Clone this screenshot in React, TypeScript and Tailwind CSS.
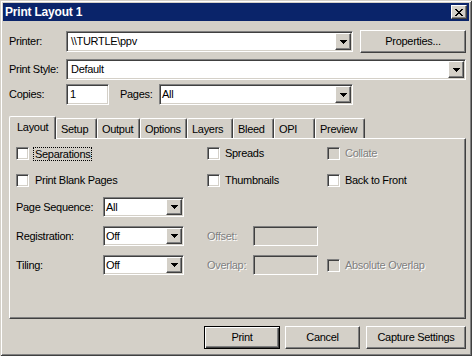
import React from 'react';

const sunken =
  'border border-t-[#808080] border-l-[#808080] border-r-white border-b-white shadow-[inset_1px_1px_0_#404040,inset_-1px_-1px_0_#d4d0c8]';
const raised =
  'border border-t-white border-l-white border-r-[#404040] border-b-[#404040] shadow-[inset_-1px_-1px_0_#808080]';
const disabledText = 'text-[#808080] [text-shadow:1px_1px_0_#ffffff]';

function Arrow() {
  return (
    <svg width="7" height="4" viewBox="0 0 7 4" shapeRendering="crispEdges">
      <rect x="0" y="0" width="7" height="1" fill="#000" />
      <rect x="1" y="1" width="5" height="1" fill="#000" />
      <rect x="2" y="2" width="3" height="1" fill="#000" />
      <rect x="3" y="3" width="1" height="1" fill="#000" />
    </svg>
  );
}

function CloseGlyph() {
  const rows = [
    [0, 2, 6, 2],
    [1, 2, 5, 2],
    [2, 4],
    [3, 2],
    [2, 4],
    [1, 2, 5, 2],
    [0, 2, 6, 2],
  ];
  return (
    <svg width="8" height="7" viewBox="0 0 8 7" shapeRendering="crispEdges">
      {rows.map((r, y) => (
        <g key={y}>
          <rect x={r[0]} y={y} width={r[1]} height="1" fill="#000" />
          {r.length > 2 && <rect x={r[2]} y={y} width={r[3]} height="1" fill="#000" />}
        </g>
      ))}
    </svg>
  );
}

function Combo({ value, className, pl = 'pl-[3px]' }: { value: string; className: string; pl?: string }) {
  return (
    <div className={`${sunken} bg-white p-[1px] flex shrink-0 ${className}`}>
      <div className={`flex-1 flex items-center leading-none ${pl}`}>{value}</div>
      <div className={`${raised} bg-[#d4d0c8] w-[16px] flex items-center justify-center`}>
        <Arrow />
      </div>
    </div>
  );
}

function Check({ disabled }: { disabled?: boolean }) {
  return <div className={`${sunken} w-[13px] h-[13px] shrink-0 ${disabled ? 'bg-[#d4d0c8]' : 'bg-white'}`} />;
}

function Button({ label, className, isDefault }: { label: string; className: string; isDefault?: boolean }) {
  if (isDefault) {
    return (
      <div
        className={`border border-black shadow-[inset_1px_1px_0_#ffffff,inset_-1px_-1px_0_#404040,inset_-2px_-2px_0_#808080] flex items-center justify-center h-[23px] ${className}`}
      >
        {label}
      </div>
    );
  }
  return <div className={`${raised} flex items-center justify-center h-[23px] ${className}`}>{label}</div>;
}

const tabs: [string, string][] = [
  ['Setup', 'w-[41px]'],
  ['Output', 'w-[43px]'],
  ['Options', 'w-[47px]'],
  ['Layers', 'w-[46px]'],
  ['Bleed', 'w-[41px]'],
  ['OPI', 'w-[41px]'],
  ['Preview', 'w-[50px]'],
];

export default function App() {
  return (
    <div className="w-[472px] h-[356px] bg-[#d4d0c8] p-[3px] shadow-[inset_1px_1px_0_#d4d0c8,inset_-1px_-1px_0_#404040,inset_2px_2px_0_#ffffff,inset_-2px_-2px_0_#808080] font-['Liberation_Sans',Arial,sans-serif] text-[11px] tracking-[-0.3px] text-black select-none">
      {/* title bar */}
      <div className="h-[18px] bg-[#0a246a] flex items-center justify-between">
        <span className="pl-[2px] text-white font-bold text-[12px] tracking-[-0.2px]">Print Layout 1</span>
        <div className={`${raised} bg-[#d4d0c8] w-[16px] h-[14px] mr-[2px] flex items-center justify-center`}>
          <CloseGlyph />
        </div>
      </div>

      <div className="pl-[6px] pr-[3px]">
        {/* printer */}
        <div className="mt-[9px] h-[23px] flex items-center">
          <span className="w-[57px]">Printer:</span>
          <Combo value="\\TURTLE\ppv" className="w-[287px] h-[21px]" />
          <Button label="Properties..." className="ml-[7px] w-[106px]" />
        </div>

        {/* style */}
        <div className="mt-[6px] h-[21px] flex items-center">
          <span className="w-[57px]">Print Style:</span>
          <Combo value="Default" className="w-[400px] h-[21px]" />
        </div>

        {/* copies / pages */}
        <div className="mt-[4px] h-[21px] flex items-center">
          <span className="w-[57px]">Copies:</span>
          <div className={`${sunken} bg-white w-[43px] h-[21px] flex items-center pl-[3px] leading-none`}>1</div>
          <span className="ml-[11px] w-[39px]">Pages:</span>
          <Combo value="All" className="w-[194px] h-[21px]" pl="pl-[1px]" />
        </div>

        {/* tabs */}
        <div className="mt-[11px] h-[22px] flex items-end">
          <div className="relative z-10 w-[47px] h-[23px] -mb-px bg-[#d4d0c8] border-l border-t border-r border-l-white border-t-white border-r-[#404040] rounded-t-[2px] shadow-[inset_-1px_0_0_#808080] pl-[7px] pt-[2px]">
            Layout
          </div>
          {tabs.map(([name, w]) => (
            <div
              key={name}
              className={`${w} h-[20px] border-l border-t border-r border-l-white border-t-white border-r-[#404040] rounded-t-[2px] shadow-[inset_-1px_0_0_#808080] pl-[4px] pt-[2px]`}
            >
              {name}
            </div>
          ))}
        </div>

        {/* panel */}
        <div className="h-[181px] border border-t-white border-l-white border-r-[#404040] border-b-[#404040] shadow-[inset_-1px_-1px_0_#808080] pt-[8px] pl-[6px]">
          <div className="flex h-[13px] items-center">
            <div className="w-[191px] flex items-center">
              <Check />
              <span className="ml-[4px] border border-dotted border-black px-[1px] leading-[12px]">Separations</span>
            </div>
            <div className="w-[120px] flex items-center">
              <Check />
              <span className="ml-[5px]">Spreads</span>
            </div>
            <div className="flex items-center">
              <Check disabled />
              <span className={`ml-[5px] ${disabledText}`}>Collate</span>
            </div>
          </div>

          <div className="mt-[14px] flex h-[13px] items-center">
            <div className="w-[191px] flex items-center">
              <Check />
              <span className="ml-[6px]">Print Blank Pages</span>
            </div>
            <div className="w-[120px] flex items-center">
              <Check />
              <span className="ml-[5px]">Thumbnails</span>
            </div>
            <div className="flex items-center">
              <Check />
              <span className="ml-[5px]">Back to Front</span>
            </div>
          </div>

          <div className="mt-[10px] h-[20px] flex items-center">
            <span className="w-[87px]">Page Sequence:</span>
            <Combo value="All" className="w-[81px] h-[20px]" pl="pl-[1px]" />
          </div>

          <div className="mt-[9px] h-[20px] flex items-center">
            <span className="w-[87px]">Registration:</span>
            <Combo value="Off" className="w-[81px] h-[20px]" pl="pl-[1px]" />
            <span className={`ml-[23px] w-[46px] ${disabledText}`}>Offset:</span>
            <div className={`${sunken} bg-[#d4d0c8] w-[65px] h-[20px]`} />
          </div>

          <div className="mt-[9px] h-[20px] flex items-center">
            <span className="w-[87px]">Tiling:</span>
            <Combo value="Off" className="w-[81px] h-[20px]" pl="pl-[1px]" />
            <span className={`ml-[23px] w-[46px] ${disabledText}`}>Overlap:</span>
            <div className={`${sunken} bg-[#d4d0c8] w-[65px] h-[20px]`} />
            <div className="ml-[9px] flex items-center">
              <Check disabled />
              <span className={`ml-[5px] ${disabledText}`}>Absolute Overlap</span>
            </div>
          </div>
        </div>

        {/* buttons */}
        <div className="mt-[7px] flex justify-end">
          <Button label="Print" className="w-[76px]" isDefault />
          <Button label="Cancel" className="ml-[5px] w-[75px]" />
          <Button label="Capture Settings" className="ml-[6px] w-[100px]" />
        </div>
      </div>
    </div>
  );
}
